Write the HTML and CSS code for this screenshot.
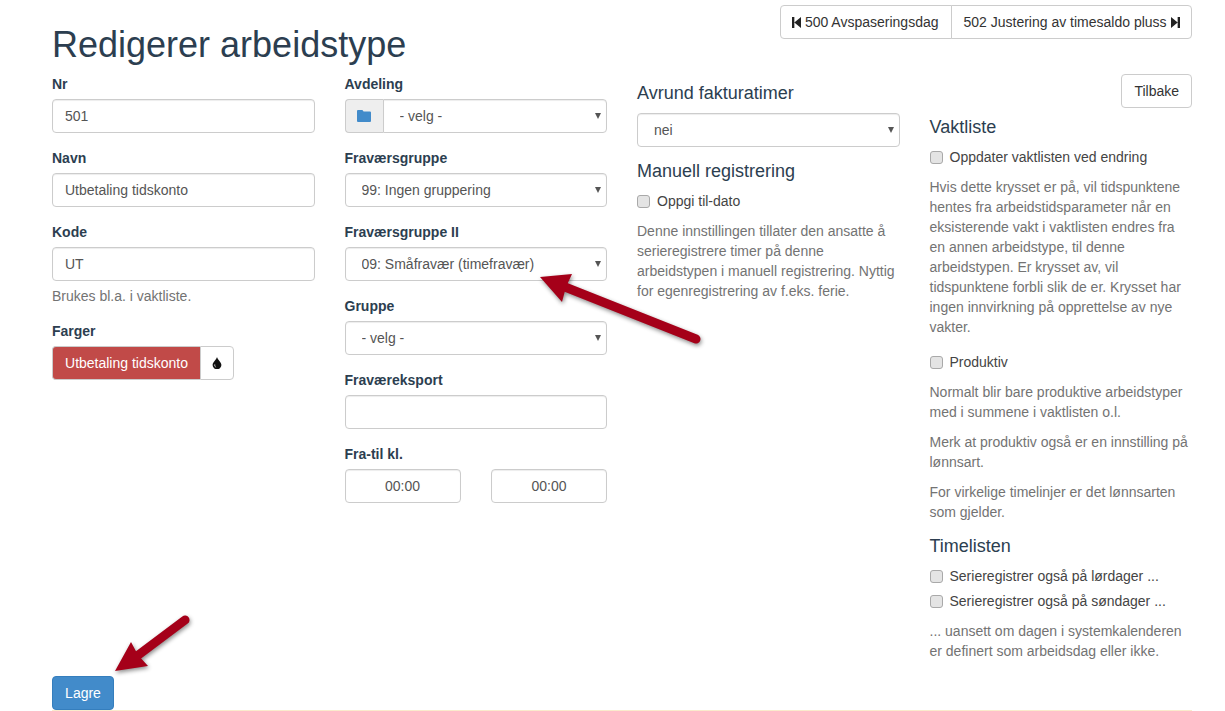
FILE: index.html
```html
<!DOCTYPE html>
<html lang="en">
<head>
    <meta charset="UTF-8">
    <meta name="viewport" content="width=device-width, initial-scale=1.0">
    <title>Redigerer arbeidstype</title>
    <link rel="stylesheet" href="styles.css">
</head>
<body>
    <div class="container">
        <div class="page-head">
            <h1>Redigerer arbeidstype</h1>
            <div class="btn-group">
                <button class="btn prev">
                    <svg class="nav-icon" viewBox="0 0 10 12"><path d="M0 0h2.6v12H0zM2.6 6L10 0v12z"/></svg>
                    500 Avspaseringsdag
                </button>
                <button class="btn next">
                    502 Justering av timesaldo pluss
                    <svg class="nav-icon" viewBox="0 0 10 12"><path d="M10 0H7.4v12H10zM7.4 6L0 0v12z"/></svg>
                </button>
            </div>
        </div>

        <form class="columns">
            <div class="col">
                <div class="form-group">
                    <label>Nr</label>
                    <input class="form-control" type="text" value="501">
                </div>
                <div class="form-group">
                    <label>Navn</label>
                    <input class="form-control" type="text" value="Utbetaling tidskonto">
                </div>
                <div class="form-group">
                    <label>Kode</label>
                    <input class="form-control" type="text" value="UT">
                    <p class="help-block">Brukes bl.a. i vaktliste.</p>
                </div>
                <div class="form-group">
                    <label>Farger</label>
                    <div class="color-picker">
                        <span class="color-name">Utbetaling tidskonto</span>
                        <button type="button" class="color-btn">
                            <svg class="tint-icon" viewBox="0 0 10 12"><path fill-rule="evenodd" d="M5 0C5.6 2.4 9.4 5.4 9.4 8A4.4 4.2 0 0 1 .6 8C.6 5.4 4.4 2.4 5 0zM2.4 7.6C2.2 9 3.2 10.2 4.4 10.4 3.4 9.8 3 8.8 3.2 7.2z"/></svg>
                        </button>
                    </div>
                </div>
            </div>

            <div class="col">
                <div class="form-group">
                    <label>Avdeling</label>
                    <div class="input-group">
                        <span class="addon">
                            <svg class="folder-icon" viewBox="0 0 14 12"><path d="M1 0h4.4l1.2 1.6H13a1 1 0 0 1 1 1V11a1 1 0 0 1-1 1H1a1 1 0 0 1-1-1V1a1 1 0 0 1 1-1z"/></svg>
                        </span>
                        <div class="select-wrap">
                            <select class="form-control attached"><option>- velg -</option></select>
                        </div>
                    </div>
                </div>
                <div class="form-group">
                    <label>Fraværsgruppe</label>
                    <div class="select-wrap">
                        <select class="form-control"><option>99: Ingen gruppering</option></select>
                    </div>
                </div>
                <div class="form-group">
                    <label>Fraværsgruppe II</label>
                    <div class="select-wrap">
                        <select class="form-control"><option>09: Småfravær (timefravær)</option></select>
                    </div>
                </div>
                <div class="form-group">
                    <label>Gruppe</label>
                    <div class="select-wrap">
                        <select class="form-control"><option>- velg -</option></select>
                    </div>
                </div>
                <div class="form-group">
                    <label>Fraværeksport</label>
                    <input class="form-control" type="text">
                </div>
                <div class="form-group">
                    <label>Fra-til kl.</label>
                    <div class="time-row">
                        <input class="form-control time" type="text" value="00:00">
                        <input class="form-control time" type="text" value="00:00">
                    </div>
                </div>
            </div>

            <div class="col">
                <h4 class="round-title">Avrund fakturatimer</h4>
                <div class="select-wrap">
                    <select class="form-control"><option>nei</option></select>
                </div>
                <h4 class="manual-title">Manuell registrering</h4>
                <label class="checkbox"><input type="checkbox"> Oppgi til-dato</label>
                <p>Denne innstillingen tillater den ansatte å serieregistrere timer på denne arbeidstypen i manuell registrering. Nyttig for egenregistrering av f.eks. ferie.</p>
            </div>

            <div class="col">
                <div class="back-row"><button type="button" class="btn solo">Tilbake</button></div>
                <h4 class="shift-title">Vaktliste</h4>
                <label class="checkbox"><input type="checkbox"> Oppdater vaktlisten ved endring</label>
                <p>Hvis dette krysset er på, vil tidspunktene hentes fra arbeidstidsparameter når en eksisterende vakt i vaktlisten endres fra en annen arbeidstype, til denne arbeidstypen. Er krysset av, vil tidspunktene forbli slik de er. Krysset har ingen innvirkning på opprettelse av nye vakter.</p>
                <label class="checkbox productive"><input type="checkbox"> Produktiv</label>
                <p>Normalt blir bare produktive arbeidstyper med i summene i vaktlisten o.l.</p>
                <p>Merk at produktiv også er en innstilling på lønnsart.</p>
                <p>For virkelige timelinjer er det lønnsarten som gjelder.</p>
                <h4 class="time-title">Timelisten</h4>
                <label class="checkbox"><input type="checkbox"> Serieregistrer også på lørdager ...</label>
                <label class="checkbox sunday"><input type="checkbox"> Serieregistrer også på søndager ...</label>
                <p>... uansett om dagen i systemkalenderen er definert som arbeidsdag eller ikke.</p>
            </div>
        </form>

        <div class="form-actions">
            <button class="btn-primary">Lagre</button>
        </div>
    </div>

    <!-- annotation arrows on top of the screenshot -->
    <svg class="arrows" width="1225" height="711" viewBox="0 0 1225 711">
        <g class="arrow">
            <path class="shaft" d="M696 339L565 287"/>
            <path class="head" d="M540 277L572 274L566 287L562 302z"/>
        </g>
        <g class="arrow">
            <path class="shaft" d="M185 620L137 656"/>
            <path class="head" d="M115 671L131 642L138 655L148 666z"/>
        </g>
    </svg>
</body>
</html>
```

FILE: styles.css
```css
/* Base */
* {
    box-sizing: border-box;
}
body {
    margin: 0;
    font-family: "Liberation Sans", Arial, sans-serif;
    font-size: 14px;
    line-height: 20px;
    color: #737373;
    background-color: #fff;
}
.container {
    width: 1140px;
    margin-left: 52px;
}

/* Heading row */
.page-head {
    display: flex;
    justify-content: space-between;
    align-items: flex-start;
    height: 74px;
}
h1 {
    margin: 25px 0 0;
    font-size: 36px;
    font-weight: 400;
    line-height: 40px;
    color: #2c3e50;
}
.btn-group {
    display: flex;
    margin-top: 5px;
}
.btn {
    height: 34px;
    padding: 6px 12px;
    font: inherit;
    color: #333;
    background-color: #fff;
    border: 1px solid #ccc;
    cursor: pointer;
}
.btn-group .prev {
    width: 172px;
    padding: 6px 0 6px 11px;
    text-align: left;
    border-radius: 4px 0 0 4px;
}
.btn-group .next {
    width: 241px;
    margin-left: -1px;
    padding: 6px 0;
    border-radius: 0 4px 4px 0;
}
.btn.solo {
    border-radius: 4px;
}
.nav-icon {
    width: 9px;
    height: 11px;
    fill: #222;
    vertical-align: -1px;
}

/* Columns */
.columns {
    display: grid;
    grid-template-columns: repeat(4, 262.5px);
    column-gap: 30px;
}
.form-group {
    margin-bottom: 15px;
}
.form-group > label {
    display: block;
    margin-bottom: 5px;
    font-weight: 700;
    color: #2c3e50;
}
.form-control {
    display: block;
    width: 100%;
    height: 34px;
    padding: 6px 12px;
    font: inherit;
    color: #555;
    background-color: #fff;
    border: 1px solid #ccc;
    border-radius: 4px;
    box-shadow: inset 0 1px 1px rgba(0, 0, 0, 0.075);
}
select.form-control {
    padding-left: 16px;
    appearance: none;
    -webkit-appearance: none;
}
.select-wrap {
    position: relative;
    flex: 1;
}
.select-wrap::after {
    content: "";
    position: absolute;
    top: 14px;
    right: 6px;
    border-left: 3.5px solid transparent;
    border-right: 3.5px solid transparent;
    border-top: 6px solid #555;
    pointer-events: none;
}
.col .help-block {
    margin: 5px 0 0;
}
.input-group {
    display: flex;
}
.addon {
    display: flex;
    align-items: center;
    justify-content: center;
    width: 38px;
    background-color: #eee;
    border: 1px solid #ccc;
    border-right: 0;
    border-radius: 4px 0 0 4px;
}
.folder-icon {
    width: 14px;
    height: 12px;
    fill: #428bca;
}
.attached {
    border-radius: 0 4px 4px 0;
}
.time-row {
    display: flex;
    justify-content: space-between;
}
.time {
    width: 116px;
    text-align: center;
}

/* Colour picker */
.color-picker {
    display: flex;
    height: 34px;
}
.color-name {
    width: 148px;
    padding: 6px 0;
    text-align: center;
    color: #fff;
    background-color: #c14a48;
    border: 1px solid #ccc;
    border-right: 0;
    border-radius: 4px 0 0 4px;
}
.color-btn {
    width: 34px;
    padding: 0;
    background-color: #fff;
    border: 1px solid #ccc;
    border-radius: 0 4px 4px 0;
}
.tint-icon {
    display: block;
    width: 10px;
    height: 12px;
    margin: 0 auto;
    fill: #111;
}

/* Right hand text */
h4 {
    margin: 0;
    font-size: 18px;
    font-weight: 400;
    line-height: 20px;
    color: #2c3e50;
}
.round-title {
    margin: 9px 0 10px;
}
.manual-title {
    margin: 14px 0 10px;
}
.shift-title {
    margin: 9px 0 10px;
}
.time-title {
    margin: 14px 0 10px;
}
.back-row {
    display: flex;
    justify-content: flex-end;
}
.col p {
    margin: 0 0 10px;
}
.checkbox {
    display: flex;
    align-items: center;
    height: 20px;
    margin-bottom: 10px;
    color: #444;
}
.checkbox.productive {
    margin-top: 15px;
}
.checkbox.sunday {
    margin-top: -5px;
}
.checkbox input {
    width: 13px;
    height: 13px;
    margin: 0 7px 0 0;
    appearance: none;
    -webkit-appearance: none;
    background-color: #e4e4e4;
    border: 1px solid #a9a9a9;
    border-radius: 3px;
}

/* Save button */
.form-actions {
    margin-top: 5px;
    height: 35px;
    border-bottom: 1px solid #faebcc;
}
.btn-primary {
    display: block;
    width: 62px;
    height: 34px;
    padding: 0;
    font: inherit;
    color: #fff;
    background-color: #428bca;
    border: 1px solid #357ebd;
    border-radius: 4px;
}

/* Arrows */
.arrows {
    position: absolute;
    top: 0;
    left: 0;
    pointer-events: none;
}
.arrow {
    filter: drop-shadow(1px 2px 2px rgba(0, 0, 0, 0.45));
}
.shaft {
    fill: none;
    stroke: #a50019;
    stroke-width: 9;
    stroke-linecap: round;
}
.head {
    fill: #a50019;
}
```
